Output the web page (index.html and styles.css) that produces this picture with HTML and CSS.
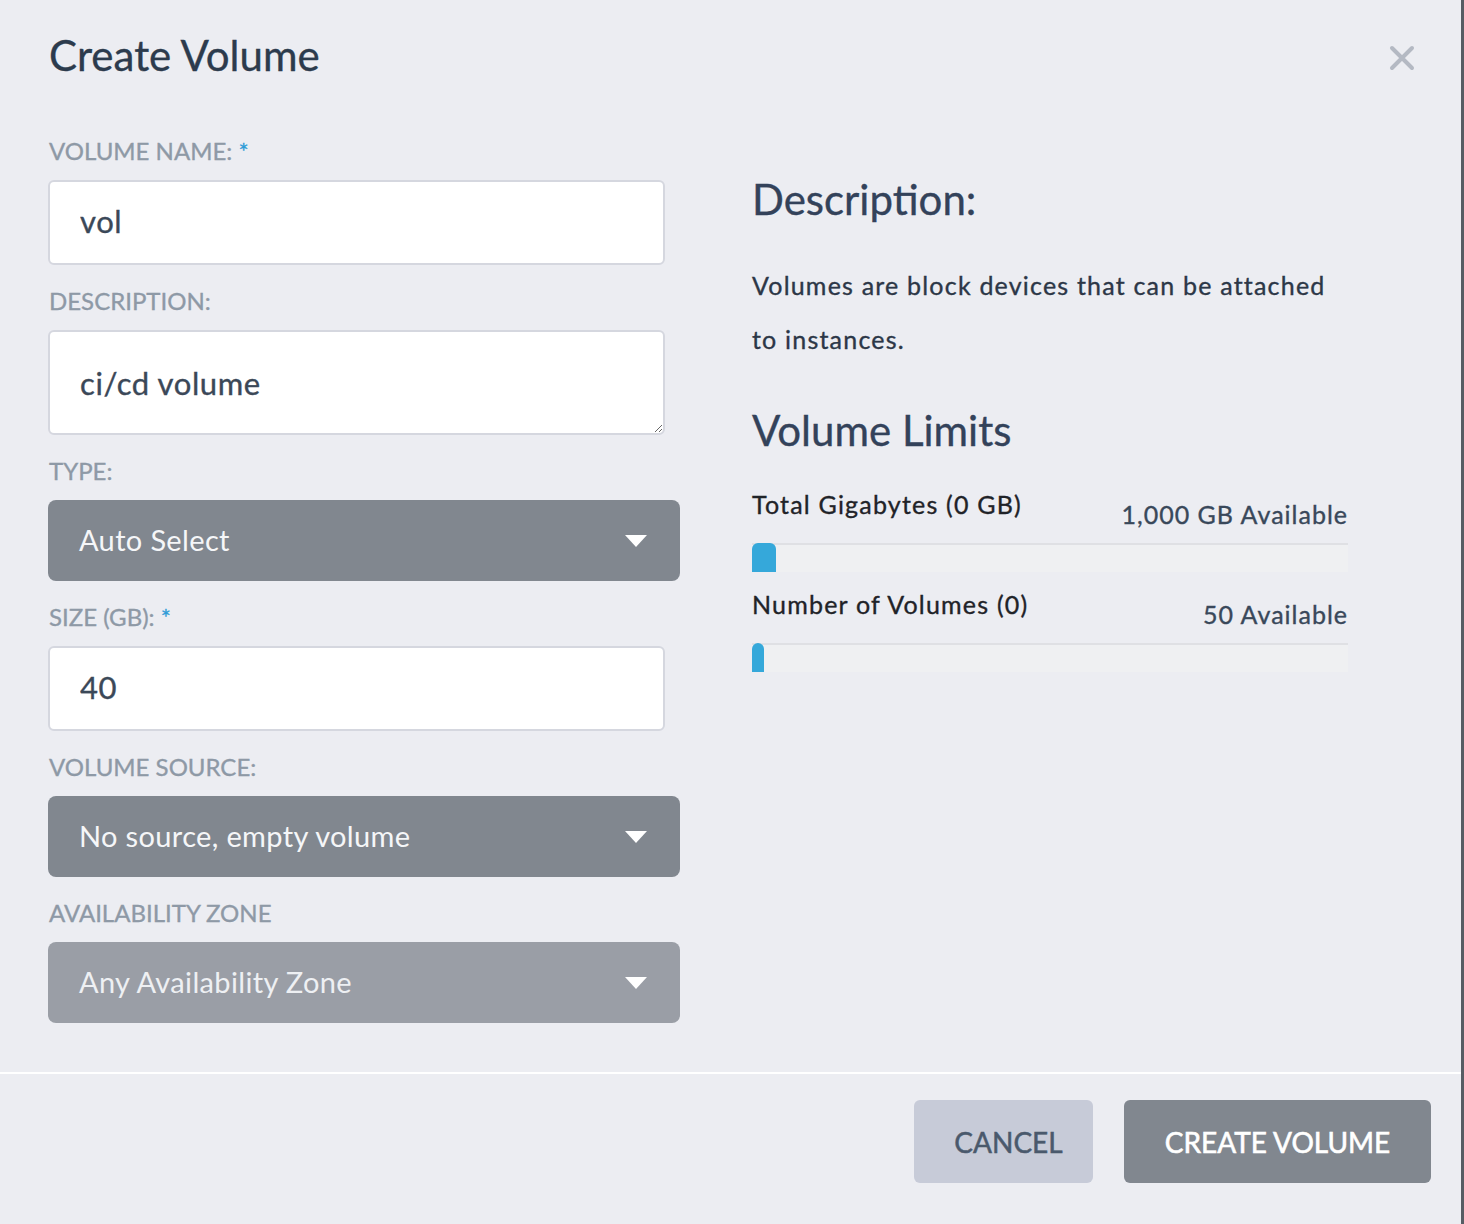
FILE: index.html
```html
<!DOCTYPE html>
<html lang="en">
<head>
<meta charset="utf-8">
<title>Create Volume</title>
<link rel="stylesheet" href="styles.css">
</head>
<body>
<div class="modal">
  <div class="modal-header">
    <h1 class="modal-title">Create Volume</h1>
    <button class="close-btn" aria-label="Close">
      <svg width="26" height="26" viewBox="0 0 26 26"><path d="M3 3 L23 23 M23 3 L3 23" stroke="#b4b9c3" stroke-width="4" stroke-linecap="round" fill="none"/></svg>
    </button>
  </div>
  <div class="modal-body">
    <div class="form-col">
      <div class="field">
        <label class="field-label">VOLUME NAME: <span class="req">*</span></label>
        <input class="text-input" type="text" value="vol">
      </div>
      <div class="field">
        <label class="field-label">DESCRIPTION:</label>
        <textarea class="text-area">ci/cd volume</textarea>
      </div>
      <div class="field">
        <label class="field-label">TYPE:</label>
        <div class="select"><span>Auto Select</span><span class="caret"></span></div>
      </div>
      <div class="field">
        <label class="field-label">SIZE (GB): <span class="req">*</span></label>
        <input class="text-input" type="text" value="40">
      </div>
      <div class="field">
        <label class="field-label">VOLUME SOURCE:</label>
        <div class="select"><span>No source, empty volume</span><span class="caret"></span></div>
      </div>
      <div class="field">
        <label class="field-label">AVAILABILITY ZONE</label>
        <div class="select disabled"><span>Any Availability Zone</span><span class="caret"></span></div>
      </div>
    </div>
    <div class="info-col">
      <h2 class="info-title">Description:</h2>
      <p class="info-text">Volumes are block devices that can be attached<br>to instances.</p>
      <h2 class="info-title limits-title">Volume Limits</h2>
      <div class="limit">
        <div class="limit-head"><span class="limit-name">Total Gigabytes (0 GB)</span><span class="limit-avail">1,000 GB Available</span></div>
        <div class="bar"><div class="bar-fill" style="width:24px"></div></div>
      </div>
      <div class="limit">
        <div class="limit-head"><span class="limit-name">Number of Volumes (0)</span><span class="limit-avail">50 Available</span></div>
        <div class="bar"><div class="bar-fill" style="width:12px"></div></div>
      </div>
    </div>
  </div>
  <div class="modal-footer">
    <button class="btn btn-cancel">CANCEL</button>
    <button class="btn btn-primary">CREATE VOLUME</button>
  </div>
</div>
</body>
</html>
```

FILE: styles.css
```css
* { box-sizing: border-box; }
html, body { margin: 0; padding: 0; }
body {
  background: #575d64;
  font-family: Lato, "Open Sans", sans-serif;
  width: 1464px;
  height: 1224px;
  overflow: hidden;
}
.modal {
  width: 1461px;
  height: 1224px;
  background: #ecedf2;
  display: flex;
  flex-direction: column;
  -webkit-text-stroke: 0.35px currentColor;
}
.modal-header {
  display: flex;
  justify-content: space-between;
  align-items: flex-start;
  padding: 30px 46px 0 49px;
  height: 80px;
}
.modal-title {
  margin: 0;
  font-size: 42px;
  line-height: 50px;
  font-weight: 400;
  color: #2c3b4d;
}
.close-btn {
  border: 0;
  background: none;
  padding: 0;
  margin-top: 15px;
  width: 26px;
  height: 26px;
  display: block;
}
.close-btn svg { display: block; }
.modal-body {
  display: flex;
  padding: 56px 0 0 48px;
  height: 992px;
  gap: 72px;
}
.form-col {
  width: 632px;
  display: flex;
  flex-direction: column;
  gap: 21px;
}
.field { display: flex; flex-direction: column; }
.field-label {
  font-size: 24px;
  line-height: 30px;
  color: #8e99a6;
  margin-bottom: 14px;
  padding-left: 1px;
}
.req { color: #2f9cd7; }
.text-input, .text-area {
  width: 617px;
  border: 2px solid #d5d7df;
  border-radius: 6px;
  background: #fff;
  font-family: Lato, "Open Sans", sans-serif;
  font-size: 31px;
  letter-spacing: 0.6px;
  color: #3b4858;
  outline: none;
  margin: 0;
  -webkit-text-stroke: 0.35px #3b4858;
}
.text-input {
  height: 85px;
  padding: 0 0 4px 30px;
}
.text-area {
  height: 105px;
  padding: 33px 0 0 30px;
  line-height: 37px;
  resize: vertical;
  display: block;
}
.select {
  height: 81px;
  width: 632px;
  border-radius: 8px;
  background: #81878f;
  color: #f5f6f8;
  font-size: 29px;
  letter-spacing: 0.35px;
  display: flex;
  align-items: center;
  justify-content: space-between;
  padding: 0 33px 2px 31px;
  -webkit-text-stroke: 0;
}
.select.disabled { background: #9a9ea6; color: #eef0f3; }
.caret {
  width: 0;
  height: 0;
  border-left: 11px solid transparent;
  border-right: 11px solid transparent;
  border-top: 12px solid #ffffff;
  margin-top: 2px;
}
.info-col {
  width: 596px;
  display: flex;
  flex-direction: column;
}
.info-title {
  margin: 38px 0 0 0;
  font-size: 42px;
  line-height: 50px;
  font-weight: 400;
  color: #33425a;
}
.limits-title { margin-top: 39px; }
.info-text {
  margin: 34px 0 0 0;
  font-size: 25px;
  letter-spacing: 1.2px;
  line-height: 54px;
  color: #2c3747;
}
.limit { margin-top: 34px; }
.limit + .limit { margin-top: 17px; }
.limit-head {
  display: flex;
  justify-content: space-between;
  align-items: flex-start;
  height: 40px;
}
.limit-name {
  font-size: 25px;
  line-height: 30px;
  letter-spacing: 1.2px;
  color: #1f2328;
}
.limit-avail {
  font-size: 25px;
  line-height: 30px;
  letter-spacing: 1px;
  color: #39485a;
  padding-top: 10px;
}
.bar {
  margin-top: 14px;
  height: 29px;
  background: #eff0f2;
  border-top: 2px solid #dfe0e4;
  position: relative;
}
.bar-fill {
  position: absolute;
  left: 0;
  top: -2px;
  height: 29px;
  background: #35a8da;
  border-radius: 6px 6px 0 0;
}
.modal-footer {
  border-top: 2px solid #ffffff;
  display: flex;
  justify-content: flex-end;
  gap: 31px;
  padding: 26px 30px 0 0;
  flex: 1;
}
.btn {
  height: 83px;
  border: 0;
  border-radius: 6px;
  font-family: Lato, "Open Sans", sans-serif;
  font-size: 28px;
  display: flex;
  align-items: center;
  justify-content: center;
  padding: 0;
}
.btn-cancel {
  width: 179px;
  background: #c7cbd8;
  color: #4a596c;
  padding-left: 10px;
  -webkit-text-stroke: 0.5px #4a596c;
}
.btn-primary {
  width: 307px;
  background: #81878f;
  color: #ffffff;
  -webkit-text-stroke: 0.6px #ffffff;
}
```
